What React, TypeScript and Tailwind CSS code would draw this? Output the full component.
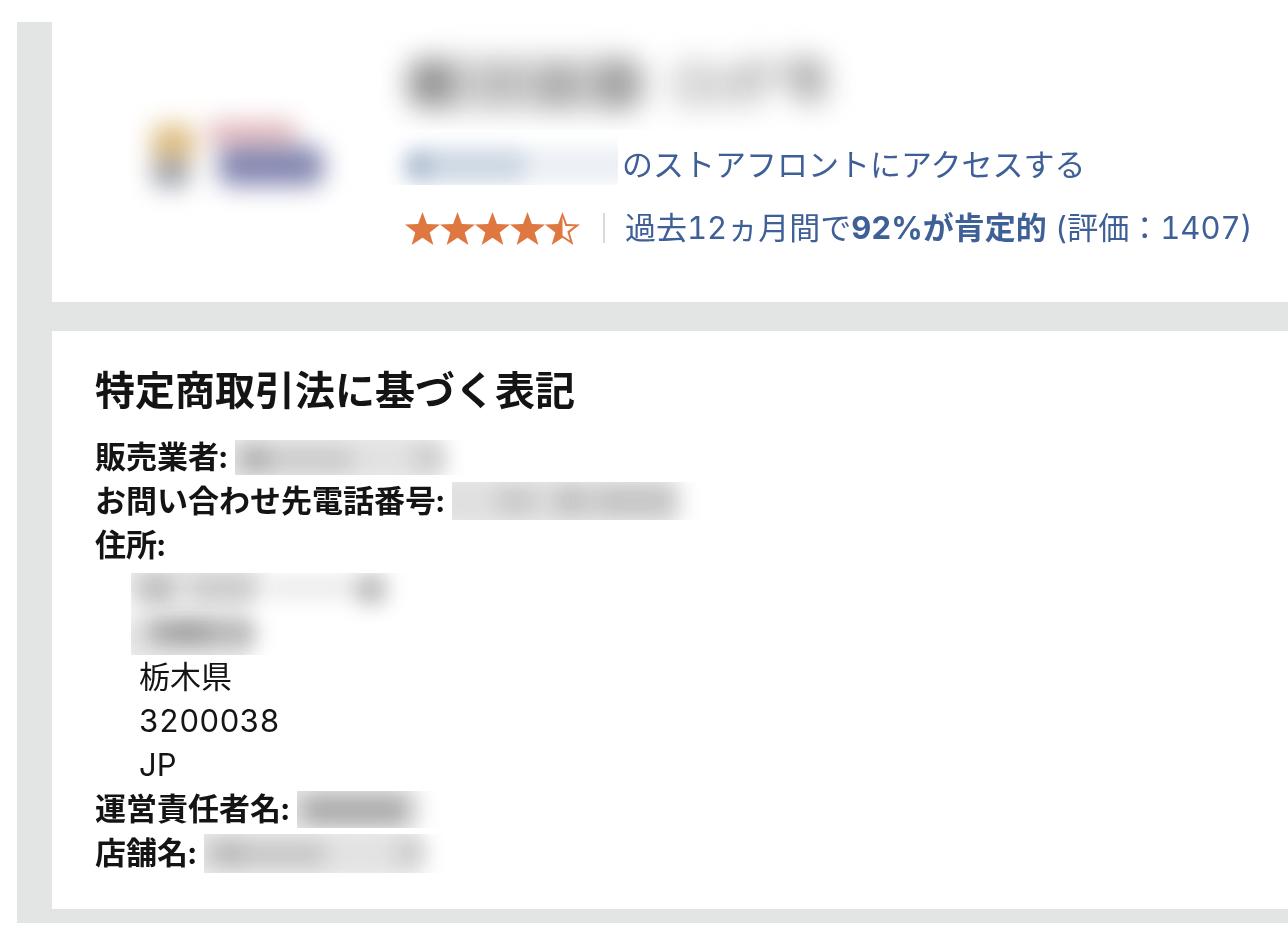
import { useId } from "react";

type Blob = {
  cx: number;
  cy: number;
  rx: number;
  ry: number;
  fill: string;
};

function Smudge({
  width,
  height,
  blur,
  blobs,
  className = "",
}: {
  width: number;
  height: number;
  blur: number;
  blobs: Blob[];
  className?: string;
}) {
  const id = useId();
  return (
    <svg
      width={width}
      height={height}
      viewBox={`0 0 ${width} ${height}`}
      className={`shrink-0 ${className}`}
      aria-hidden="true"
    >
      <filter
        id={id}
        filterUnits="userSpaceOnUse"
        x={-80}
        y={-80}
        width={width + 160}
        height={height + 160}
        colorInterpolationFilters="sRGB"
      >
        <feGaussianBlur stdDeviation={blur} />
      </filter>
      {blobs.map((b, i) => (
        <rect
          key={i}
          x={b.cx - b.rx}
          y={b.cy - b.ry}
          width={b.rx * 2}
          height={b.ry * 2}
          rx={Math.min(b.rx, b.ry) * 0.7}
          fill={b.fill}
          filter={`url(#${id})`}
          className="mix-blend-multiply"
        />
      ))}
    </svg>
  );
}

const LOGO: Blob[] = [
  { cx: 41, cy: 75, rx: 19, ry: 15, fill: "#a0a4ae" },
  { cx: 43, cy: 45, rx: 22, ry: 19, fill: "#e0bf85" },
  { cx: 122, cy: 36, rx: 45, ry: 14, fill: "#e6bec2" },
  { cx: 141, cy: 68, rx: 53, ry: 20, fill: "#8588b2" },
];

const TITLE: Blob[] = [
  { cx: 146, cy: 62, rx: 120, ry: 27, fill: "#cecece" },
  { cx: 52, cy: 61, rx: 21, ry: 21, fill: "#b4b4b4" },
  { cx: 122, cy: 61, rx: 18, ry: 18, fill: "#e8e8e8" },
  { cx: 178, cy: 64, rx: 20, ry: 20, fill: "#d4d4d4" },
  { cx: 237, cy: 62, rx: 21, ry: 23, fill: "#c8c8c8" },
  { cx: 316, cy: 62, rx: 26, ry: 25, fill: "#dadada" },
  { cx: 362, cy: 66, rx: 24, ry: 20, fill: "#dddddd" },
  { cx: 396, cy: 50, rx: 42, ry: 16, fill: "#e0e0e0" },
  { cx: 430, cy: 60, rx: 18, ry: 23, fill: "#c4c4c4" },
];

const LINK: Blob[] = [
  { cx: 85, cy: 36, rx: 61, ry: 17, fill: "#dfe6ee" },
  { cx: 150, cy: 35, rx: 122, ry: 17, fill: "#ebeff4" },
  { cx: 38, cy: 36, rx: 13, ry: 13, fill: "#d6dee9" },
];

const SELLER: Blob[] = [
  { cx: 92, cy: 18, rx: 120, ry: 26, fill: "#e2e2e2" },
  { cx: 62, cy: 20, rx: 56, ry: 12, fill: "#e6e6e6" },
  { cx: 20, cy: 19, rx: 14, ry: 13, fill: "#dcdcdc" },
  { cx: 194, cy: 18, rx: 15, ry: 13, fill: "#e8e8e8" },
];

const PHONE: Blob[] = [
  { cx: 103, cy: 19, rx: 127, ry: 28, fill: "#e0e0e0" },
  { cx: 64, cy: 19, rx: 20, ry: 13, fill: "#e6e6e6" },
  { cx: 119, cy: 19, rx: 18, ry: 14, fill: "#dfdfdf" },
  { cx: 182, cy: 19, rx: 40, ry: 13, fill: "#dfdfdf" },
];

const ADDRESS: Blob[] = [
  { cx: 62, cy: 10, rx: 70, ry: 25, fill: "#e5e5e5" },
  { cx: 54, cy: 68, rx: 68, ry: 25, fill: "#e5e5e5" },
  { cx: 26, cy: 16, rx: 18, ry: 14, fill: "#d6d6d6" },
  { cx: 92, cy: 16, rx: 32, ry: 12, fill: "#e2e2e2" },
  { cx: 180, cy: 14, rx: 44, ry: 13, fill: "#ededed" },
  { cx: 240, cy: 16, rx: 16, ry: 16, fill: "#c0c0c0" },
  { cx: 70, cy: 59, rx: 56, ry: 13, fill: "#cccccc" },
  { cx: 56, cy: 59, rx: 24, ry: 11, fill: "#e0e0e0" },
];

const MANAGER: Blob[] = [
  { cx: 44, cy: 18, rx: 80, ry: 26, fill: "#dedede" },
  { cx: 58, cy: 19, rx: 52, ry: 14, fill: "#c6c6c6" },
];

const SHOP: Blob[] = [
  { cx: 98, cy: 19, rx: 124, ry: 27, fill: "#e3e3e3" },
  { cx: 20, cy: 19, rx: 15, ry: 13, fill: "#d8d8d8" },
  { cx: 74, cy: 20, rx: 48, ry: 12, fill: "#e0e0e0" },
  { cx: 206, cy: 18, rx: 15, ry: 13, fill: "#e8e8e8" },
];

const STAR = "M17.5 0 21.9 12 35 12.4 24.7 20.5 28.4 33 17.5 25.7 6.6 33 10.3 20.5 0 12.4 13.1 12Z";

function Star({ half = false }: { half?: boolean }) {
  return (
    <svg viewBox="0 0 35 33" className="h-[33px] w-[35px]" fill="#de7840" aria-hidden="true">
      {half ? (
        <path fillRule="evenodd" d={`${STAR}M17.5 5V23.6L25 28.4 22.3 19.6 29.4 14.2 20.3 13.9Z`} />
      ) : (
        <path d={STAR} />
      )}
    </svg>
  );
}

function Row({ label, width, height, blobs }: { label: string; width?: number; height?: number; blobs?: Blob[] }) {
  return (
    <div className="flex h-11 items-center gap-2">
      <dt className="font-bold">{label}</dt>
      {blobs && width && height && (
        <dd>
          <Smudge width={width} height={height} blur={10} blobs={blobs} />
        </dd>
      )}
    </div>
  );
}

export default function App() {
  return (
    <div className="overflow-x-hidden bg-white pt-[22px] pb-5 pl-[17px] font-['Inter','Noto_Sans_CJK_JP',sans-serif] text-[31px] leading-[44px] text-[#141414] tabular-nums">
      <main className="flex flex-col gap-[29px] bg-[#e3e5e5] pb-[14px] pl-[35px]">
        <section className="flex bg-white pb-[46px] pl-[78px] whitespace-nowrap">
          <Smudge width={250} height={118} blur={12} blobs={LOGO} className="mt-[76px]" />
          <div>
            <Smudge width={490} height={108} blur={14} blobs={TITLE} className="block" />
            <div className="flex gap-1">
              <Smudge width={238} height={55} blur={10} blobs={LINK} />
              <a href="#storefront" className="leading-[70px] text-[#3f6096]">
                のストアフロントにアクセスする
              </a>
            </div>
            <div className="flex h-14 items-center pl-[25px]">
              <div className="flex" role="img" aria-label="5つ星のうち4.5">
                <Star />
                <Star />
                <Star />
                <Star />
                <Star half />
              </div>
              <span className="mr-5 ml-[23px] h-[30px] w-[2px] bg-[#d9d9d9]" />
              <a href="#reviews" className="text-[#3f6096]">
                過去12ヵ月間で<b>92%が肯定的</b> (評価：1407)
              </a>
            </div>
          </div>
        </section>

        <section className="bg-white pt-[34px] pb-[34px] pl-[43px]">
          <h2 className="mb-[18px] text-[40px] leading-[52px] font-bold">特定商取引法に基づく表記</h2>
          <dl>
            <Row label="販売業者:" width={269} height={35} blobs={SELLER} />
            <Row label="お問い合わせ先電話番号:" width={250} height={38} blobs={PHONE} />
            <Row label="住所:" />
            <dd className="pt-[6px] pl-9">
              <Smudge width={280} height={82} blur={10} blobs={ADDRESS} className="block" />
              <div className="pl-2">
                <p>栃木県</p>
                <p>3200038</p>
                <p>JP</p>
              </div>
            </dd>
            <Row label="運営責任者名:" width={150} height={37} blobs={MANAGER} />
            <Row label="店舗名:" width={240} height={39} blobs={SHOP} />
          </dl>
        </section>
      </main>
    </div>
  );
}
